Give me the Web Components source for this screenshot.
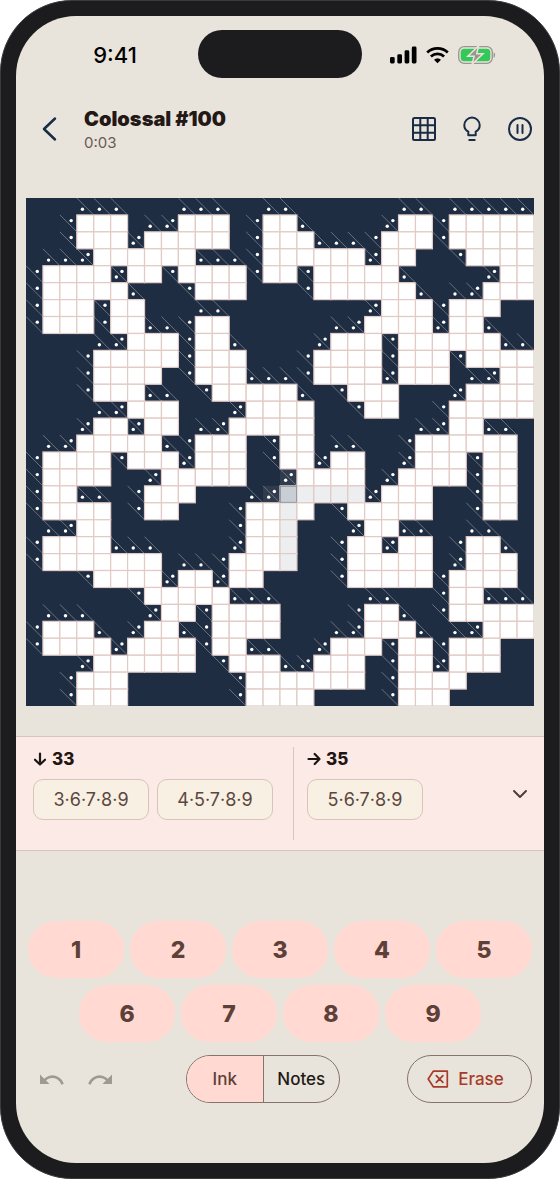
<!DOCTYPE html>
<html lang="en">
<head>
<meta charset="utf-8">
<meta name="viewport" content="width=device-width, initial-scale=1">
<title>Colossal #100</title>
<style>
  body { margin: 0; background: #fff; font-family: Inter, "Liberation Sans", sans-serif; color: #231815; }
</style>
</head>
<body>
<phone-frame>
  <status-bar></status-bar>
  <game-header name="Colossal #100" time="0:03"></game-header>
  <kakuro-board></kakuro-board>
  <combo-panel></combo-panel>
  <number-pad></number-pad>
  <game-controls></game-controls>
</phone-frame>
<script>
class Base extends HTMLElement {
  constructor() {
    super();
    this.attachShadow({ mode: "open" });
  }
  connectedCallback() {
    this.shadowRoot.innerHTML = `<style>
      *, *::before { box-sizing: border-box; }
      button { font: inherit; color: inherit; background: none; border: 0; padding: 0; margin: 0; cursor: pointer; }
      svg { display: block; }
    </style>` + this.render();
  }
}

customElements.define("phone-frame", class extends Base {
  render() {
    return `<style>
      :host { display: block; box-sizing: border-box; min-height: 100vh; padding: 15px; background: #1c1c1e; border: 1px solid #3a3a3d; border-radius: 72px; }
      main { display: flex; flex-direction: column; min-height: calc(100vh - 32px); background: #e9e4db; border-radius: 60px; overflow: hidden; }
    </style><main><slot></slot></main>`;
  }
});

customElements.define("status-bar", class extends Base {
  render() {
    return `<style>
      :host { display: grid; grid-template-columns: 1fr 164px 1fr; align-items: center; height: 48px; margin-top: 14px; color: #000; }
      time { padding: 2px 0 0 16px; text-align: center; font-size: 22px; font-weight: 500; line-height: 26px; }
      .island { height: 48px; border-radius: 24px; background: #1c1c1e; }
      .icons { display: flex; justify-content: center; align-items: center; gap: 9px; padding: 2px 20px 0 0; }
    </style>
    <time>9:41</time><div class="island"></div>
    <div class="icons">
      <svg width="27" height="18" viewBox="0 0 27 18"><rect y="11" width="4.700" height="6.500" rx="1.400"/><rect x="7.300" y="8.300" width="4.700" height="9.200" rx="1.400"/><rect x="14.600" y="4.300" width="4.700" height="13.200" rx="1.400"/><rect x="21.800" y="0.500" width="4.700" height="17" rx="1.400"/></svg>
      <svg width="23" height="18" viewBox="0 0 23 18" fill="none" stroke="#000" stroke-width="2.700"><path d="M1.200 6.400a15.200 15.200 0 0 1 20.600 0"/><path d="M4.900 10.400a9.800 9.800 0 0 1 13.200 0"/><path d="M8 13.800a5.200 5.200 0 0 1 7 0L11.500 17.300Z" fill="#000" stroke="none"/></svg>
      <svg width="38" height="18" viewBox="0 0 38 18"><rect x=".7" y=".7" width="33.600" height="16.600" rx="5.500" fill="none" stroke="#99958f" stroke-width="1.300"/><rect x="2.700" y="2.700" width="29.600" height="12.600" rx="3.600" fill="#34c759"/><path d="M35.600 6.200c2 .9 2 4.700 0 5.600z" fill="#99958f"/><path d="M20.700-.2 9.800 10.200h6.300l-2 8 10.900-10.500h-6.300z" fill="#99958f" stroke="#e9e4db" stroke-width="1.500"/></svg>
    </div>`;
  }
});

customElements.define("game-header", class extends Base {
  render() {
    return `<style>
      :host { display: flex; align-items: center; height: 48px; margin-top: 27px; padding-left: 10px; }
      button { display: grid; place-items: center; width: 48px; height: 48px; }
      .title { flex: 1; padding-left: 10px; }
      h1 { margin: 0; font-size: 20px; line-height: 28px; font-weight: 900; }
      p { margin: 0; font-size: 15px; line-height: 20px; color: #6b5954; }
      svg { fill: none; stroke: #1a2b45; stroke-width: 2; stroke-linecap: round; stroke-linejoin: round; }
    </style>
    <button aria-label="Back"><svg width="28" height="28" viewBox="0 0 28 28"><path d="M19 3.500 8 14l11 10.500" stroke-width="2.500"/></svg></button>
    <div class="title"><h1>${this.getAttribute("name")}</h1><p>${this.getAttribute("time")}</p></div>
    <button aria-label="Grid"><svg width="24" height="24" viewBox="0 0 24 24"><rect x="1" y="1" width="22" height="22" rx="1.500"/><path d="M8.300 1v22M15.700 1v22M1 8.300h22M1 15.700h22"/></svg></button>
    <button aria-label="Hint"><svg width="24" height="26" viewBox="0 0 24 26"><path d="M8.300 19.300v-3.700C5.500 14.200 4.300 11.800 4.300 9.300a7.700 7.700 0 0 1 15.400 0c0 2.500-1.200 4.900-4 6.300v3.700zM9.300 24h5.400"/></svg></button>
    <button aria-label="Pause"><svg width="24" height="24" viewBox="0 0 24 24"><circle cx="12" cy="12" r="11"/><path d="M9.500 8v8M14.500 8v8"/></svg></button>`;
  }
});

// White runs of every row, as "first-last" column pairs.
const RUNS = [
  "", "3-5 9-11 14-15 22-23 25-29", "3-5 7-11 14-16 21-23 25-29", "4-9 14-19 21-22 26-29",
  "1-4 6-7 9-12 14-15 17-21 28-29", "1-5 10-12 17-22 27-29", "1-3 5-6 21-23 25-27", "1-3 5-6 10-11 20-23 25-26",
  "6-8 10-11 18-20 22-27", "4-8 10-12 17-20 22-24 26-29", "4-7 10-12 17-20 22-24 28-29", "4-6 11-15 19-21 26-29",
  "6-8 13-16 20-21 25-29", "4-5 7-8 12-16 25-26", "3-7 10-12 15-16 23-28", "1-4 6-8 10-12 15-16 18-19 23-25 27-28",
  "1-4 8-12 16-19 22-25 27-28", "1-2 7-9 15-19 21-23 27-28", "1-4 7-8 13-16 19-23 27-28", "3-4 13-15 20-21",
  "1-4 13-15 19-20 22-23 26-27", "1-7 12-15 19-23 26-28", "4-7 9-10 12-13 19-23 25-28", "7-11 25-26",
  "8-9 11-14 20-21 25-29", "1-3 7-8 11-14 20-22 27-29", "1-4 6-9 11-12 18-20 22-23 25-27", "4-9 12-14 17-19 22-23 25-27",
  "3-5 13-19 22-25", "3-5 13-16 22-24"
];

customElements.define("kakuro-board", class extends Base {
  render() {
    const N = 30, S = 18;
    const open = RUNS.map(row => {
      const cells = Array(N).fill(false);
      if (row) row.split(" ").forEach(run => { const [a, b] = run.split("-").map(Number); cells.fill(true, a, b + 1); });
      return cells;
    });
    const sel = { r: 17, c: 15 };
    let cells = "", lines = "", dots = "", marks = "";
    for (let r = 0; r < N; r++) for (let c = 0; c < N; c++) {
      const x = c * S, y = r * S;
      if (open[r][c]) {
        const lit = (r === sel.r && c > sel.c && c < 20) || (c === sel.c && r > sel.r && r < 22);
        cells += `<rect x="${x}" y="${y}" width="${S}" height="${S}" fill="${lit ? "#edeef0" : "#fff"}"/>`;
        continue;
      }
      const right = c + 1 < N && open[r][c + 1], down = r + 1 < N && open[r + 1][c];
      if (right || down) lines += `M${x} ${y}l${S} ${S}`;
      if (right) dots += `<circle cx="${x + 12}" cy="${y + 6}" r="1.800"/>`;
      if (down) dots += `<circle cx="${x + 6}" cy="${y + 12}" r="1.800"/>`;
      if ((r === 16 && c === 15) || (r === 17 && c === 14)) marks += `<rect x="${x}" y="${y}" width="${S}" height="${S}"/>`;
    }
    return `<style>
      :host { display: block; margin: 45px 10px 0; }
      svg { width: 100%; height: auto; }
    </style>
    <svg viewBox="0 0 540 540" role="img" aria-label="Kakuro board">
      <rect width="540" height="540" fill="#1f2d43"/>
      <g fill="#303c4d">${marks}</g>
      <g stroke="#e2cbc6" stroke-width="1.300">${cells}</g>
      <path d="${lines}" stroke="#7d8794" stroke-width=".8"/>
      <g fill="#fff">${dots}</g>
      <rect x="270.500" y="306.500" width="17" height="17" fill="#c9ced5" stroke="#8e96a2"/>
    </svg>`;
  }
});

customElements.define("combo-panel", class extends Base {
  render() {
    const group = (dir, path, sum, combos) => `<section aria-label="${dir}">
      <h2><svg width="14" height="14" viewBox="0 0 14 14"><path d="${path}"/></svg>${sum}</h2>
      <div class="chips">${combos.map(t => `<button>${t}</button>`).join("")}</div></section>`;
    return `<style>
      :host { display: flex; height: 115px; box-sizing: border-box; margin-top: 30px; padding: 10px 0 10px 17px; background: #fceae6; border: solid #dcc3bd; border-width: 1px 0; }
      section:first-of-type { width: 261px; border-right: 1px solid #dcc3bd; margin-right: 13px; }
      section { flex: none; }
      h2 { display: flex; align-items: center; gap: 5px; margin: 0 0 8px; font-size: 17px; line-height: 24px; font-weight: 800; color: #1f1512; }
      svg { fill: none; stroke: #1f1512; stroke-width: 2.200; stroke-linecap: round; stroke-linejoin: round; }
      .chips { display: flex; gap: 8px; }
      .chips button { width: 116px; height: 41px; border: 1px solid #d9c3bb; border-radius: 10px; background: #f8f0e3; color: #5c4641; font-size: 18px; line-height: 22px; }
      .more { display: grid; place-items: center; width: 48px; margin-left: auto; }
      .more svg { stroke: #4f3d39; stroke-width: 2; }
    </style>
    ${group("Down", "M7 1.500v11M2 7.700l5 4.800 5-4.800", 33, ["3·6·7·8·9", "4·5·7·8·9"])}
    ${group("Across", "M1.500 7h11M7.700 2l4.800 5-4.800 5", 35, ["5·6·7·8·9"])}
    <button class="more" aria-label="Expand"><svg width="16" height="16" viewBox="0 0 16 16"><path d="M2 5l6 6 6-6"/></svg></button>`;
  }
});

customElements.define("number-pad", class extends Base {
  render() {
    const row = ns => `<div>${ns.map(n => `<button>${n}</button>`).join("")}</div>`;
    return `<style>
      :host { display: grid; gap: 7px; padding: 70px 12px 0; }
      div { display: flex; justify-content: center; gap: 6px; }
      button { width: calc((100% - 24px) / 5); height: 57px; border-radius: 28px; background: #ffd9d2; color: #5d4037; font-size: 23px; font-weight: 800; line-height: 30px; }
    </style>${row([1, 2, 3, 4, 5])}${row([6, 7, 8, 9])}`;
  }
});

customElements.define("game-controls", class extends Base {
  render() {
    const arrow = `<path d="M0 2.500v9.500h9.500L6.100 8.600a9.200 9.200 0 0 1 15.200 4.100l2.500-.9A11.800 11.800 0 0 0 4.200 6.700Z"/>`;
    return `<style>
      :host { display: flex; justify-content: space-between; align-items: center; padding: 13px 12px 60px; font-size: 17px; font-weight: 500; line-height: 22px; }
      .history { display: flex; }
      .history button { display: grid; place-items: center; width: 48px; height: 48px; fill: #9f9992; }
      fieldset { display: flex; width: 154px; height: 48px; margin: 0 5px 0 0; padding: 0; border: 1px solid #85736d; border-radius: 24px; overflow: hidden; }
      label { flex: 1; display: grid; place-items: center; position: relative; color: #231a17; }
      label + label { border-left: 1px solid #85736d; }
      label:has(:checked) { background: #ffd9d2; color: #5d4037; }
      input { position: absolute; inset: 0; margin: 0; opacity: 0; }
      .erase { display: flex; align-items: center; justify-content: center; gap: 9px; width: 125px; height: 48px; padding-right: 8px; border: 1px solid #85736d; border-radius: 24px; color: #a83a2a; }
      .erase svg { fill: none; stroke: #a83a2a; stroke-width: 1.700; stroke-linejoin: round; stroke-linecap: round; }
    </style>
    <div class="history">
      <button aria-label="Undo" disabled><svg width="24" height="14" viewBox="0 0 24 14">${arrow}</svg></button>
      <button aria-label="Redo" disabled><svg width="24" height="14" viewBox="0 0 24 14"><g transform="matrix(-1 0 0 1 24 0)">${arrow}</g></svg></button>
    </div>
    <fieldset aria-label="Entry mode">
      <label for="ink"><input type="radio" name="mode" id="ink" checked>Ink</label>
      <label for="notes"><input type="radio" name="mode" id="notes">Notes</label>
    </fieldset>
    <button class="erase"><svg width="22" height="18" viewBox="0 0 22 18"><path d="M6.300 1.200h14v15.600h-14L1.200 9zM9.300 5.700l6.600 6.600M15.900 5.700l-6.600 6.600"/></svg>Erase</button>`;
  }
});
</script>
</body>
</html>
